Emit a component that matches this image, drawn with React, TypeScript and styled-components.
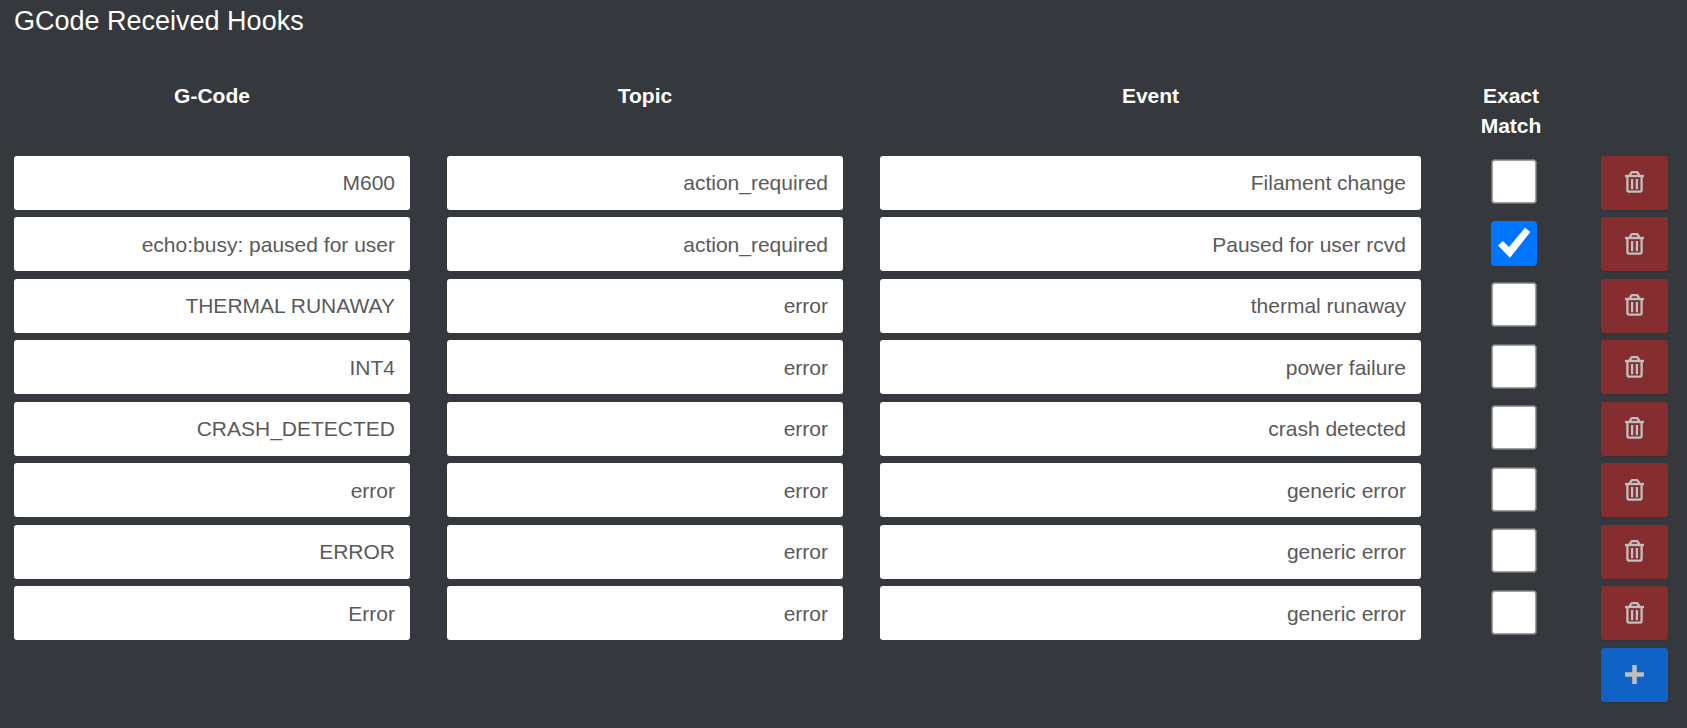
import React from "react";
import styled, { createGlobalStyle } from "styled-components";

const GlobalStyle = createGlobalStyle`
  * { box-sizing: border-box; }
  body {
    margin: 0;
    background: #35383c;
    color: #fff;
    font-family: "Liberation Sans", Arial, sans-serif;
    font-size: 21px;
    line-height: 30px;
  }
`;

const Page = styled.main`
  min-height: 728px;
  padding: 6px 19px 0 14px;
`;

const Title = styled.h3`
  margin: 0 0 45px;
  font-size: 27px;
  font-weight: 400;
  line-height: 30px;
`;

const Row = styled.div`
  display: grid;
  grid-template-columns: 396px 396px 541px 106px 67px;
  column-gap: 37px;
`;

const HeaderRow = styled(Row)`
  margin-bottom: 14.9px;
  font-weight: 700;
  text-align: center;
`;

const Rows = styled.div`
  display: flex;
  flex-direction: column;
  gap: 7.5px;
`;

const Field = styled.div`
  height: 54px;
  padding: 12.4px 15px 0;
  border-radius: 3px;
  background: #fff;
  color: #5a5a5a;
  text-align: right;
  white-space: nowrap;
`;

const Check = styled.div<{ $on?: boolean }>`
  width: 46px;
  height: 45px;
  margin: 3.2px 0 0 33px;
  border: ${(p) => (p.$on ? "0" : "1px solid #6c6d70")};
  border-radius: 4px;
  background: ${(p) => (p.$on ? "#0075ff" : "#fff")};
  box-shadow: ${(p) => (p.$on ? "none" : "inset 0 0 0 1px #a0a0a0")};
  svg { display: block; }
`;

const Button = styled.button<{ $kind: "danger" | "primary" }>`
  display: flex;
  align-items: center;
  justify-content: center;
  grid-column: 5;
  height: 54px;
  padding: 0 0 1px 0;
  border: 0;
  border-radius: 3px;
  background: ${(p) => (p.$kind === "danger" ? "#862e2f" : "#1062c6")};
  box-shadow: 0 1px 2px rgba(0, 0, 0, 0.12);
  color: #bfc0c1;
`;

const TrashIcon = () => (
  <svg width="19" height="22" viewBox="0 0 19 22" fill="none" stroke="currentColor" strokeWidth="2.3">
    <path d="M0 5h19" />
    <path d="M4.6 4.6L6 2.1Q6.5 1.2 7.5 1.2h4q1 0 1.5.9l1.4 2.5" />
    <path d="M2.4 5v14.1q0 1.6 1.6 1.6h11q1.6 0 1.6-1.6V5" />
    <path d="M7.1 8v10.3M11.9 8v10.3" />
  </svg>
);

const PlusIcon = () => (
  <svg width="19" height="19" viewBox="0 0 19 19" fill="currentColor">
    <rect x="7.2" width="4.6" height="19" rx="0.8" />
    <rect y="7.2" width="19" height="4.6" rx="0.8" />
  </svg>
);

const hooks = [
  { code: "M600", topic: "action_required", event: "Filament change" },
  { code: "echo:busy: paused for user", topic: "action_required", event: "Paused for user rcvd", exact: true },
  { code: "THERMAL RUNAWAY", topic: "error", event: "thermal runaway" },
  { code: "INT4", topic: "error", event: "power failure" },
  { code: "CRASH_DETECTED", topic: "error", event: "crash detected" },
  { code: "error", topic: "error", event: "generic error" },
  { code: "ERROR", topic: "error", event: "generic error" },
  { code: "Error", topic: "error", event: "generic error" },
];

export default function App() {
  return (
    <Page>
      <GlobalStyle />
      <Title>GCode Received Hooks</Title>
      <HeaderRow>
        <div>G-Code</div>
        <div>Topic</div>
        <div>Event</div>
        <div>Exact<br />Match</div>
      </HeaderRow>
      <Rows>
        {hooks.map((h) => (
          <Row key={h.code}>
            <Field>{h.code}</Field>
            <Field>{h.topic}</Field>
            <Field>{h.event}</Field>
            <Check $on={h.exact} role="checkbox" aria-checked={!!h.exact}>
              {h.exact && (
                <svg width="46" height="45" viewBox="0 0 46 45">
                  <path d="M7 24.5L12 20L18 26L34 6.7L39.3 11L19 36.8Z" fill="#fff" />
                </svg>
              )}
            </Check>
            <Button $kind="danger" aria-label="Delete"><TrashIcon /></Button>
          </Row>
        ))}
        <Row>
          <Button $kind="primary" aria-label="Add"><PlusIcon /></Button>
        </Row>
      </Rows>
    </Page>
  );
}
